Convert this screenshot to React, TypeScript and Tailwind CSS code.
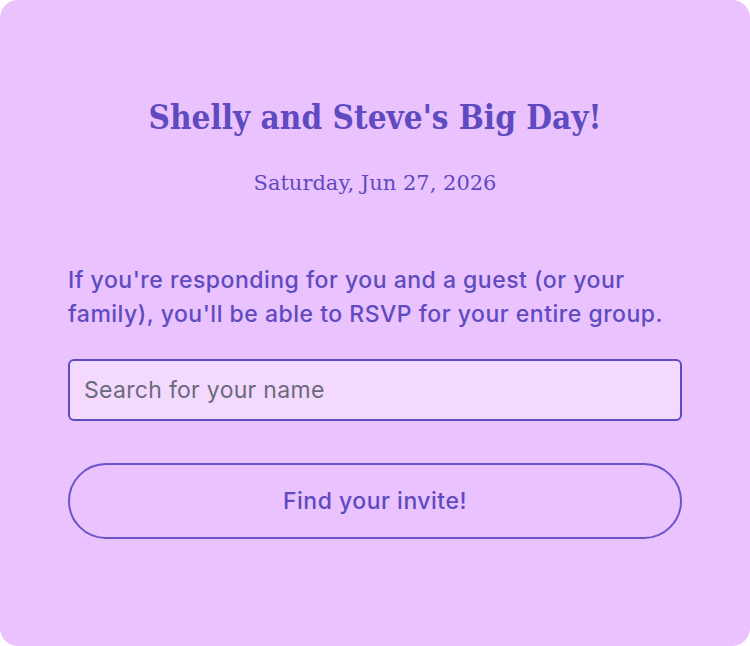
export default function App() {
  return (
    <div className="min-h-screen w-full bg-white">
      <div className="flex h-[646px] w-[750px] flex-col rounded-[18px] bg-[#e9c2fe] px-[68px] pt-[96px] text-[#5f4bbf] [font-family:Inter,'Open_Sans',sans-serif]">
        <h1 className="text-center text-[33px] font-bold leading-[44px] [font-stretch:condensed] [font-family:'DejaVu_Serif_Condensed','DejaVu_Serif',serif]">
          Shelly and Steve's Big Day!
        </h1>
        <p className="mt-[29px] text-center text-[21px] leading-[28px] [font-family:'DejaVu_Serif','Liberation_Serif',serif]">
          Saturday, Jun 27, 2026
        </p>
        <p className="mt-[66px] text-[23px] font-medium leading-[34px] tracking-[0.5px]">
          If you're responding for you and a guest (or your family), you'll be able to RSVP for your entire group.
        </p>
        <input
          type="text"
          placeholder="Search for your name"
          className="mt-[28px] h-[62px] w-full rounded-[6px] border-2 border-[#5f4bbf] bg-[#f3d9fe] px-[14px] text-[23px] tracking-[0.3px] text-[#333] outline-none placeholder:text-[#6b6a7a]"
        />
        <button
          type="button"
          className="mt-[42px] h-[76px] w-full rounded-full border-2 border-[#6a55c6] text-[23px] font-medium tracking-[0.5px] text-[#5f4bbf]"
        >
          Find your invite!
        </button>
      </div>
    </div>
  )
}
